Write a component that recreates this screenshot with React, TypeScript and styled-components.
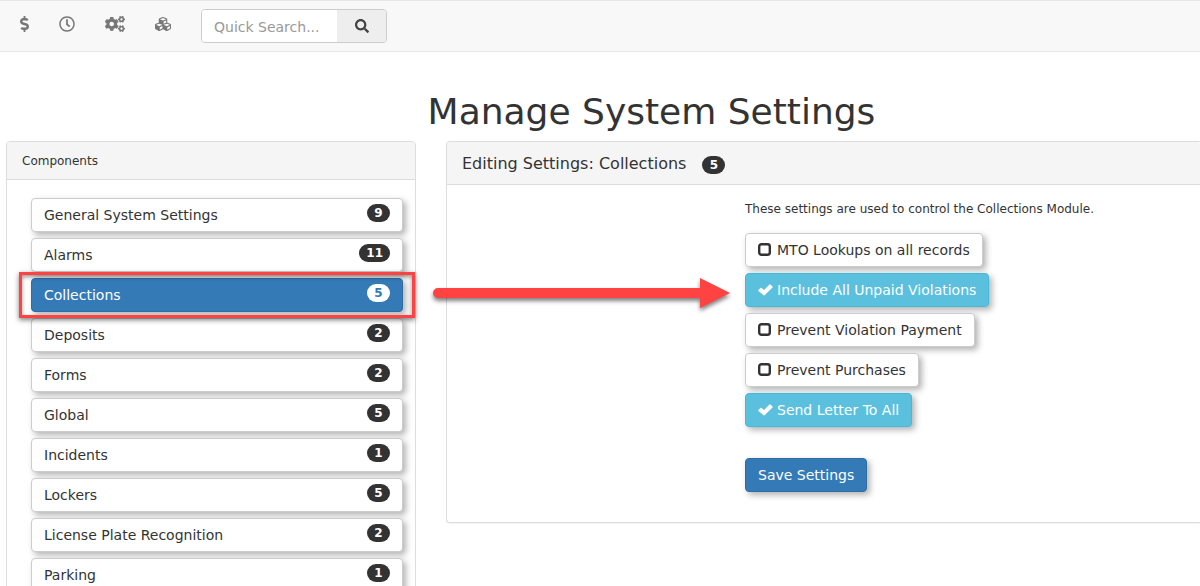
import React, { useState } from "react";
import styled, { createGlobalStyle, css } from "styled-components";
import { FaDollarSign, FaRegClock, FaCogs, FaCubes, FaSearch } from "react-icons/fa";

const GlobalStyle = createGlobalStyle`
  *, *::before, *::after { box-sizing: border-box; }
  body {
    margin: 0;
    background: #fff;
    color: #333;
    font: 14px/20px Verdana, "DejaVu Sans", sans-serif;
  }
  button, input { font: inherit; }
`;

const Page = styled.div`
  height: 100vh;
  overflow: hidden;
`;

const NavBar = styled.nav`
  display: flex;
  align-items: flex-start;
  height: 52px;
  padding: 8px 20px;
  background: #f8f8f8;
  border: solid #e7e7e7;
  border-width: 1px 0;
`;

const NavLinks = styled.div`
  display: flex;
  gap: 30px;
  margin-right: 30px;
`;

const NavLink = styled.a<{ $width: number }>`
  display: flex;
  align-items: center;
  height: 30px;
  color: #777;
  svg {
    width: ${({ $width }) => $width}px;
    height: 16px;
  }
`;

const SearchForm = styled.form`
  display: flex;
  height: 34px;
  border: 1px solid #ccc;
  border-radius: 4px;
  overflow: hidden;
`;

const SearchInput = styled.input`
  width: 135px;
  padding: 2px 12px 0;
  border: 0;
  background: #fff;
  color: #555;
  &::placeholder { color: #999; opacity: 1; }
`;

const SearchButton = styled.button`
  display: flex;
  align-items: center;
  justify-content: center;
  width: 49px;
  padding: 0;
  border: 0;
  background: #eee;
  color: #444;
`;

const Title = styled.h1`
  margin: 40px 0 9px;
  padding-left: 103px;
  font-size: 36px;
  font-weight: 400;
  line-height: 40px;
  text-align: center;
`;

const Columns = styled.main`
  display: grid;
  grid-template-columns: 410px minmax(0, 1fr);
  gap: 30px;
  align-items: start;
  padding-left: 6px;
`;

const Panel = styled.section<{ $bleed?: boolean }>`
  border: 1px solid #ddd;
  border-radius: 4px;
  background: #fff;
  box-shadow: 0 1px 1px rgba(0, 0, 0, 0.05);
  ${({ $bleed }) =>
    $bleed &&
    css`
      border-right: 0;
      border-radius: 4px 0 0 4px;
    `}
`;

const Badge = styled.span<{ $inverse?: boolean }>`
  min-width: 23px;
  padding: 3px 7px;
  border-radius: 10px;
  background: ${({ $inverse }) => ($inverse ? "#fff" : "#333")};
  color: ${({ $inverse }) => ($inverse ? "#337ab7" : "#fff")};
  font-size: 12px;
  font-weight: 700;
  line-height: 12px;
  text-align: center;
`;

const PanelHeader = styled.header<{ $large?: boolean }>`
  display: flex;
  align-items: center;
  gap: 16px;
  height: ${({ $large }) => ($large ? 43 : 38)}px;
  padding: ${({ $large }) => ($large ? 2 : 0)}px 15px 0;
  background: #f5f5f5;
  border-bottom: 1px solid #ddd;
  border-radius: 3px 3px 0 0;
  font-size: ${({ $large }) => ($large ? 16 : 12)}px;
  ${Badge} { margin-top: 2px; }
`;

const PanelTitle = styled.h2`
  margin: 0;
  font: inherit;
`;

const ComponentList = styled.ul`
  display: flex;
  flex-direction: column;
  gap: 6px;
  margin: 0;
  padding: 18px 12px 18px 24px;
  list-style: none;
`;

const ComponentItem = styled.li`
  position: relative;
`;

const raised = css`
  height: 34px;
  padding: 0 12px;
  border: 1px solid #ccc;
  border-radius: 4px;
  box-shadow: 3px 3px 6px rgba(0, 0, 0, 0.3);
  white-space: nowrap;
  cursor: pointer;
`;

const ComponentButton = styled.button<{ $active: boolean }>`
  ${raised}
  display: flex;
  align-items: flex-start;
  justify-content: space-between;
  width: 100%;
  padding-top: 6px;
  background: #fff;
  color: #333;
  text-align: left;
  ${Badge} { margin-top: -1px; }
  ${({ $active }) =>
    $active &&
    css`
      background: #337ab7;
      border-color: #2e6da4;
      color: #fff;
    `}
`;

const Highlight = styled.div`
  position: absolute;
  z-index: 1;
  inset: -6px -12px;
  border: 3px solid #ff4343;
  box-shadow: 0 2px 5px rgba(0, 0, 0, 0.5), inset 0 2px 4px rgba(0, 0, 0, 0.4);
  pointer-events: none;
`;

const Arrow = styled.svg`
  position: absolute;
  z-index: 1;
  top: -3px;
  left: calc(100% + 28px);
  overflow: visible;
  filter: drop-shadow(0 3px 2px rgba(0, 0, 0, 0.5));
  pointer-events: none;
`;

const SettingsForm = styled.form`
  display: flex;
  flex-direction: column;
  align-items: flex-start;
  gap: 6px;
  padding: 14px 0 30px 298px;
`;

const Description = styled.p`
  margin: 0 0 8px;
  font-size: 12px;
`;

const Option = styled.label<{ $checked: boolean }>`
  ${raised}
  position: relative;
  display: flex;
  align-items: center;
  gap: 4px;
  background: ${({ $checked }) => ($checked ? "#5bc0de" : "#fff")};
  border-color: ${({ $checked }) => ($checked ? "#46b8da" : "#ccc")};
  color: ${({ $checked }) => ($checked ? "#fff" : "#333")};
`;

const HiddenCheckbox = styled.input`
  position: absolute;
  inset: 0;
  margin: 0;
  opacity: 0;
`;

const SaveButton = styled.button`
  ${raised}
  margin-top: 25px;
  background: #337ab7;
  border-color: #2e6da4;
  color: #fff;
`;

const CheckIcon = () => (
  <svg width="15" height="14" viewBox="0 0 15 14" aria-hidden="true">
    <path d="M0.4 7.1 2.5 4.9Q3 4.5 3.5 4.9L6 7.1 11.5 1.5Q11.9 1.1 12.3 1.5L14.5 3.6Q14.9 4 14.5 4.4L6.6 12.2Q6.1 12.7 5.6 12.2L.4 7.9Q0 7.5.4 7.1Z" fill="currentColor" />
  </svg>
);

const EmptyIcon = () => (
  <svg width="15" height="14" viewBox="0 0 15 14" aria-hidden="true">
    <rect x="1.2" y="1.2" width="10.6" height="10.6" rx="2.2" fill="none" stroke="currentColor" strokeWidth="2.4" />
  </svg>
);

const navItems = [
  { label: "Payments", width: 9, icon: <FaDollarSign /> },
  { label: "History", width: 16, icon: <FaRegClock /> },
  { label: "Settings", width: 20, icon: <FaCogs /> },
  { label: "Modules", width: 16, icon: <FaCubes /> },
];

const components: [string, number][] = [
  ["General System Settings", 9],
  ["Alarms", 11],
  ["Collections", 5],
  ["Deposits", 2],
  ["Forms", 2],
  ["Global", 5],
  ["Incidents", 1],
  ["Lockers", 5],
  ["License Plate Recognition", 2],
  ["Parking", 1],
];

const initialOptions: [string, boolean][] = [
  ["MTO Lookups on all records", false],
  ["Include All Unpaid Violations", true],
  ["Prevent Violation Payment", false],
  ["Prevent Purchases", false],
  ["Send Letter To All", true],
];

export default function App() {
  const [options, setOptions] = useState(initialOptions);
  const toggle = (name: string) =>
    setOptions(options.map(([n, on]) => [n, n === name ? !on : on]));

  return (
    <Page>
      <GlobalStyle />
      <NavBar>
        <NavLinks>
          {navItems.map(({ label, width, icon }) => (
            <NavLink key={label} href="#" aria-label={label} $width={width}>{icon}</NavLink>
          ))}
        </NavLinks>
        <SearchForm role="search" onSubmit={(e) => e.preventDefault()}>
          <SearchInput aria-label="Quick Search" placeholder="Quick Search..." />
          <SearchButton type="submit" aria-label="Search"><FaSearch size={14} /></SearchButton>
        </SearchForm>
      </NavBar>
      <Title>Manage System Settings</Title>
      <Columns>
        <Panel>
          <PanelHeader><PanelTitle>Components</PanelTitle></PanelHeader>
          <ComponentList>
            {components.map(([name, count]) => {
              const active = name === "Collections";
              return (
                <ComponentItem key={name}>
                  <ComponentButton type="button" $active={active}>
                    {name}
                    <Badge $inverse={active}>{count}</Badge>
                  </ComponentButton>
                  {active && (
                    <>
                      <Highlight />
                      <Arrow width="300" height="36" viewBox="0 0 300 36" aria-hidden="true">
                        <path d="M7 13H269V3L299 18 269 33V23H7A5 5 0 0 1 7 13Z" fill="#ff4343" />
                      </Arrow>
                    </>
                  )}
                </ComponentItem>
              );
            })}
          </ComponentList>
        </Panel>
        <Panel $bleed>
          <PanelHeader $large>
            <PanelTitle>Editing Settings: Collections</PanelTitle>
            <Badge>5</Badge>
          </PanelHeader>
          <SettingsForm onSubmit={(e) => e.preventDefault()}>
            <Description>These settings are used to control the Collections Module.</Description>
            {options.map(([name, checked]) => (
              <Option key={name} $checked={checked}>
                <HiddenCheckbox type="checkbox" checked={checked} onChange={() => toggle(name)} />
                {checked ? <CheckIcon /> : <EmptyIcon />}
                {name}
              </Option>
            ))}
            <SaveButton type="submit">Save Settings</SaveButton>
          </SettingsForm>
        </Panel>
      </Columns>
    </Page>
  );
}
